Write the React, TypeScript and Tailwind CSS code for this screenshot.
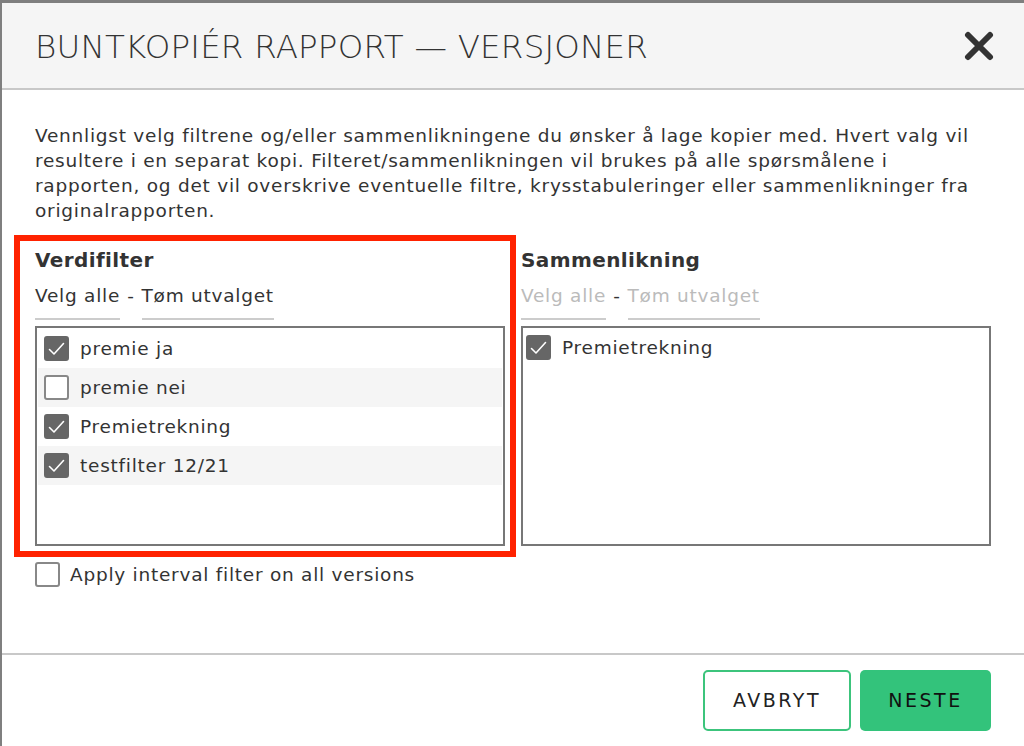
import React, { useState } from 'react';

type Item = { label: string; checked: boolean };

const Checkbox: React.FC<{ checked: boolean; onClick?: () => void }> = ({ checked, onClick }) => (
  <button
    onClick={onClick}
    className={
      'flex h-[25px] w-[25px] shrink-0 items-center justify-center rounded-[3px] border-2 ' +
      (checked ? 'border-[#666] bg-[#666]' : 'border-[#888] bg-white')
    }
  >
    {checked && (
      <svg width="17" height="14" viewBox="0 0 17 14" fill="none">
        <path d="M1.5 7.5 L6 12 L15.5 1.5" stroke="#fff" strokeWidth="1.6" strokeLinecap="round" strokeLinejoin="round" />
      </svg>
    )}
  </button>
);

const Column: React.FC<{
  title: string;
  items: Item[];
  disabled?: boolean;
  onToggle: (i: number) => void;
}> = ({ title, items, disabled, onToggle }) => (
  <div className="flex flex-col">
    <h3 className="text-[20px] font-bold leading-[24px] tracking-[0.4px] text-[#333]">{title}</h3>
    <div className={'mt-[12px] flex items-start text-[18.5px] leading-[24px] tracking-[0.75px] ' + (disabled ? 'text-[#bbb]' : 'text-[#333]')}>
      <span className="border-b-2 border-[#ccc] pb-[10px]">Velg alle</span>
      <span className="mx-[7px] text-[#333]">-</span>
      <span className="border-b-2 border-[#ccc] pb-[10px]">Tøm utvalget</span>
    </div>
    <div className={'mt-[6px] h-[220px] border-2 border-[#777] bg-white ' + (disabled ? 'pt-0' : 'px-[1px] pt-[1px]')}>
      {items.map((it, i) => (
        <div
          key={it.label}
          className={
            'flex h-[39px] items-center gap-[11px] ' +
            (disabled ? 'pl-[3px] ' : 'pl-[6px] ') +
            (i % 2 === 1 ? 'bg-[#f5f5f5]' : 'bg-white')
          }
        >
          <Checkbox checked={it.checked} onClick={() => onToggle(i)} />
          <span className="text-[18.5px] tracking-[0.75px] text-[#333]">{it.label}</span>
        </div>
      ))}
    </div>
  </div>
);

export default function App() {
  const [filters, setFilters] = useState<Item[]>([
    { label: 'premie ja', checked: true },
    { label: 'premie nei', checked: false },
    { label: 'Premietrekning', checked: true },
    { label: 'testfilter 12/21', checked: true },
  ]);
  const [comps, setComps] = useState<Item[]>([{ label: 'Premietrekning', checked: true }]);
  const [interval, setInterval] = useState(false);

  const toggle = (list: Item[], set: (l: Item[]) => void) => (i: number) =>
    set(list.map((it, j) => (j === i ? { ...it, checked: !it.checked } : it)));

  return (
    <div className="h-screen overflow-hidden bg-[#7f7f7f] pl-[2px] pt-[3px] font-['DejaVu_Sans',sans-serif]">
      <div className="flex h-full flex-col bg-white">
        {/* header */}
        <div className="flex h-[87px] items-center justify-between border-b-2 border-[#c8c8c8] bg-[#f5f5f5] pl-[33px] pr-[30px]">
          <h2 className="mt-[3px] text-[32.5px] font-light tracking-[0.2px] text-[#333]">BUNTKOPIÉR RAPPORT — VERSJONER</h2>
          <button className="text-[#333]">
            <svg width="30" height="30" viewBox="0 0 30 30">
              <path d="M4 4 L26 26 M26 4 L4 26" stroke="#333" strokeWidth="6" strokeLinecap="round" />
            </svg>
          </button>
        </div>

        {/* body */}
        <div className="flex-1 px-[33px] pt-[33px]">
          <p className="max-w-[958px] text-[18.5px] leading-[25px] tracking-[0.75px] text-[#333]">
            Vennligst velg filtrene og/eller sammenlikningene du ønsker å lage kopier med. Hvert valg vil resultere i en
            separat kopi. Filteret/sammenlikningen vil brukes på alle spørsmålene i rapporten, og det vil overskrive
            eventuelle filtre, krysstabuleringer eller sammenlikninger fra originalrapporten.
          </p>

          <div className="mt-[25px] grid grid-cols-2 gap-[16px]">
            <div className="relative">
              <Column title="Verdifilter" items={filters} onToggle={toggle(filters, setFilters)} />
              <div className="pointer-events-none absolute -bottom-[11px] -left-[21px] -right-[11px] -top-[13px] border-[6px] border-[#ff2200]" />
            </div>
            <Column title="Sammenlikning" items={comps} disabled onToggle={toggle(comps, setComps)} />
          </div>

          <label className="mt-[15px] flex items-center gap-[10px]">
            <Checkbox checked={interval} onClick={() => setInterval(!interval)} />
            <span className="text-[18.5px] tracking-[0.75px] text-[#333]">Apply interval filter on all versions</span>
          </label>
        </div>

        {/* footer */}
        <div className="flex h-[93px] items-start justify-end gap-[9px] border-t-2 border-[#c8c8c8] pr-[33px] pt-[15px]">
          <button className="h-[61px] w-[148px] rounded-[5px] border-2 border-[#3cc47c] bg-white text-[19px] tracking-[2.5px] text-[#222]">
            AVBRYT
          </button>
          <button className="h-[61px] w-[131px] rounded-[5px] bg-[#33c37b] text-[19px] tracking-[2.5px] text-[#111]">
            NESTE
          </button>
        </div>
      </div>
    </div>
  );
}
